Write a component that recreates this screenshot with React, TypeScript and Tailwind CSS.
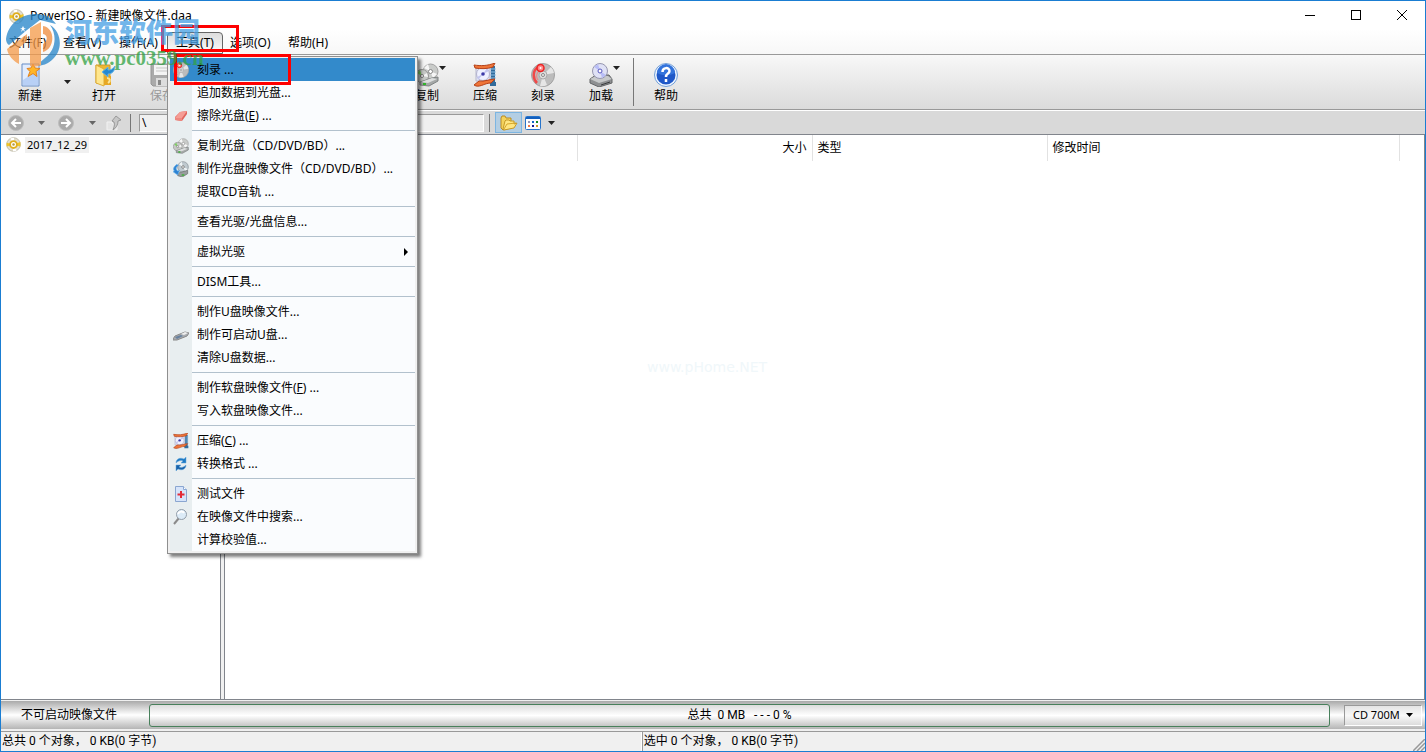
import type { ReactNode } from "react";

const CJK = "font-['Noto_Sans','Noto_Sans_CJK_SC',sans-serif]";
const NARROW = "font-['Roboto','Noto_Sans_CJK_SC',sans-serif]";

function GoldDisc({ className = "" }: { className?: string }) {
  return (
    <svg viewBox="0 0 24 24" className={className}>
      <circle cx="12" cy="12" r="11" fill="#e3dfcf" stroke="#aaa48c" />
      <path d="M12 12 1 9v6ZM12 12l11-4v7Z" fill="#f0c524" />
      <path d="m12 12-5-10 6-1ZM12 12l5 10-6 1Z" fill="#fff" />
      <circle cx="12" cy="12" r="5.500" fill="#fff" stroke="#e0ae1c" strokeWidth="3" />
      <circle cx="12" cy="12" r="2" fill="#b59a46" />
    </svg>
  );
}

function BurnIcon({ className = "" }: { className?: string }) {
  return (
    <svg viewBox="0 0 24 24" className={className}>
      <circle cx="12" cy="12" r="11.500" fill="#bcbcbc" stroke="#a2a2a2" />
      <path d="M12 12 20 4a11 11 0 0 1 3 6ZM12 12l-3 11a11 11 0 0 0 7-1Z" fill="#e6e6e6" />
      <circle cx="12" cy="12" r="4" fill="#ddd" stroke="#aaa" />
      <circle cx="12" cy="12" r="1.500" fill="#f4f4f4" stroke="#888" />
      <path d="M7 4C1 8 2 16 6 20" fill="none" stroke="#f04848" strokeWidth="2.500" />
      <path d="M8 8c-3 3-3 6-1 9" fill="none" stroke="#f77" />
      <circle cx="9.500" cy="5" r="3.500" fill="#f88" stroke="#e22" strokeWidth="1.500" />
      <circle cx="9.500" cy="5" r="1" fill="#fff" />
    </svg>
  );
}

function CopyIcon({ className = "" }: { className?: string }) {
  return (
    <svg viewBox="0 0 24 24" className={className}>
      <circle cx="15.500" cy="8.500" r="7.500" fill="#c9cbc9" stroke="#a2a2a2" />
      <path d="m15 8-6-3 4-4ZM15 8l7 3-4 4Z" fill="#f6f6f6" />
      <circle cx="15.500" cy="8.500" r="2" fill="#fff" stroke="#888" />
      <circle cx="7" cy="13" r="6.500" fill="#c5c8c5" stroke="#959595" />
      <path d="m7 13-5-3 3-3Z" fill="#7cd060" />
      <path d="m7 13 5-3 1 4Z" fill="#f4f4f4" />
      <circle cx="7" cy="13" r="1.500" fill="#fff" stroke="#777" />
      <path d="m5 19 12-4 6-1v4l-9 5-9-1Z" fill="#a5a8a8" stroke="#7f8383" />
      <path d="m6 19 11-4 5 1-9 4Z" fill="#dcdede" />
      <path d="M8 21h3" stroke="#31b52b" strokeWidth="2" />
    </svg>
  );
}

function ImageIcon({ className = "" }: { className?: string }) {
  return (
    <svg viewBox="0 0 24 24" className={className}>
      <circle cx="15" cy="9" r="8" fill="#bfc9cf" stroke="#858d92" />
      <path d="m15 9-6-4 4-4ZM15 9l7 3-3 4Z" fill="#f0f4f6" />
      <circle cx="15" cy="9" r="2" fill="#eee" stroke="#666" />
      <path d="m8 18 14-4v5l-8 5-7-2Z" fill="#999d9e" stroke="#686c6d" />
      <path d="M6 5C0 9 0 13 2 15l-2 1 7 5 3-7-3 1C4 12 4 9 8 7Z" fill="#2c83d3" stroke="#6eb4ea" />
      <path d="M13 21h4" stroke="#35b52d" strokeWidth="2" />
    </svg>
  );
}

function CompressIcon({ className = "" }: { className?: string }) {
  return (
    <svg viewBox="0 0 24 24" className={className}>
      <path d="M20 3v19M17 21h6" stroke="#326b9b" strokeWidth="4" />
      <path d="M17 6h6M17 9h6M17 12h6M17 15h6" stroke="#8fc2e6" />
      <path d="M3 5h14v13H3Z" fill="#e6e8f5" stroke="#b4b6cd" />
      <circle cx="10" cy="11" r="6.500" fill="#eef0ff" stroke="#b3b3cc" />
      <path d="m10 11-6 3 1 3ZM10 11l6-3-2-3Z" fill="#c4c6ee" />
      <circle cx="10" cy="11" r="1.800" fill="#3b39a8" />
      <path d="M1 2c7 1 13 1 21-2l-2 4C14 6 8 6 2 5Z" fill="#ef7538" stroke="#b44119" />
      <path d="m1 22 5-4c5 1 11-2 16-2l-4 4c-6 0-10 4-15 3Z" fill="#ef7538" stroke="#b44119" />
    </svg>
  );
}

function MountIcon({ className = "" }: { className?: string }) {
  return (
    <svg viewBox="0 0 24 24" className={className}>
      <path d="m1 16 6-4h13l3 4v4l-13 4-9-4Z" fill="#8e9092" stroke="#626466" />
      <path d="m1 16 9 4 13-4-4-3H7Z" fill="#c7c9ca" />
      <path d="m12 22 9-3" stroke="#393b3c" />
      <circle cx="11" cy="8" r="7.500" fill="#dfe1f5" stroke="#9696af" />
      <path d="m11 8-6-4 4-3ZM11 8l6 4-4 3Z" fill="#b8bdf6" />
      <circle cx="11" cy="8" r="2" fill="#fff" stroke="#5656be" />
    </svg>
  );
}

function HelpIcon({ className = "" }: { className?: string }) {
  return (
    <svg viewBox="0 0 24 24" className={className}>
      <circle cx="12" cy="12" r="11.500" fill="#eef5ff" stroke="#719ed7" />
      <circle cx="12" cy="12" r="9.500" fill="#1f58c8" />
      <path d="M3 10a9 9 0 0 1 18 0c-6 3-12 3-18 0Z" fill="#3474dc" />
      <path d="M8.500 9c0-5 7-5 7-1 0 3-3.500 2-3.500 6M12 16v3" fill="none" stroke="#fff" strokeWidth="2.500" />
    </svg>
  );
}

function NewIcon() {
  return (
    <svg viewBox="0 0 24 24" className="size-6">
      <path d="M4 1h17v22H4Z" fill="#e2ecfd" stroke="#678dc6" />
      <path d="M5 17 20 7v15H5Z" fill="#b8d0f6" />
      <path d="m15 1 2 4 5 .500-4 3 1 5-4-3-5 3 2-5-3-3 4-.500Z" fill="#ffb527" stroke="#e28320" />
    </svg>
  );
}

function OpenIcon() {
  return (
    <svg viewBox="0 0 24 24" className="size-6">
      <path d="M4 2h14v18H4Z" fill="#efb72e" stroke="#cb9830" />
      <path d="m4 2 8 4v17l-8-3Z" fill="#ffe68d" stroke="#dcad37" />
      <path d="M12 13h7v9h-7" fill="#e7a823" />
      <path d="M15 15c3 0 4 3 1 5" fill="none" stroke="#fbe69a" strokeWidth="2" />
      <path d="M23 3c0 5-3 8-7 8v3l-6-5 6-5v3c3 0 5-1 7-4Z" fill="#2689d1" stroke="#64b4e8" />
    </svg>
  );
}

function SaveIcon() {
  return (
    <svg viewBox="0 0 24 24" className="size-6">
      <path d="M1 1h22v22H3l-2-2Z" fill="#aaa" stroke="#969696" />
      <path d="M4 2h15v10H4Z" fill="#f4f4f4" />
      <path d="M6 5h11M6 8h11" stroke="#c7c7c7" />
      <path d="M6 15h13v8H6Z" fill="#ddd" />
      <path d="M8 17h3v5H8Z" fill="#888" />
    </svg>
  );
}

function FolderIcon() {
  return (
    <svg viewBox="0 0 18 16" className="h-4 w-[18px]">
      <path d="m1 3 1-2h3l1 2h5v10l-8 2-2-2Z" fill="#f4d35c" stroke="#b98b22" />
      <path d="m5 6 1-1h3l1 1h4v3l3-1-3 5-10 2-1-1Z" fill="#ffe681" stroke="#c69a29" />
      <path d="m4 14 3-5 9-1" fill="none" stroke="#d6a72c" />
    </svg>
  );
}

function ViewIcon() {
  return (
    <svg viewBox="0 0 16 14" className="h-3.5 w-4">
      <rect x=".500" y=".500" width="15" height="13" rx="1" fill="#fff" stroke="#2774cb" />
      <path d="M1 1h14v2H1Z" fill="#1560bd" />
      <path d="M3 5h2v2H3Z" fill="#9998b8" />
      <path d="M7 5h2v2H7Z" fill="#1269c7" />
      <path d="M11 5h2v2h-2Z" fill="#118b22" />
      <path d="M3 9h2v2H3Z" fill="#f07845" />
      <path d="M7 9h2v2H7Z" fill="#151a91" />
      <path d="M11 9h2v2h-2Z" fill="#d09926" />
    </svg>
  );
}

function ArrowDisc({ flip = false }: { flip?: boolean }) {
  return (
    <svg viewBox="0 0 16 16" className={flip ? "size-4 -scale-x-100" : "size-4"}>
      <circle cx="8" cy="8" r="7.500" fill="#aaa" stroke="#bdbdbd" />
      <path d="m8 4-4 4 4 4M4 8h9" fill="none" stroke="#fff" strokeWidth="2" />
    </svg>
  );
}

function UpIcon() {
  return (
    <svg viewBox="0 0 16 16" className="size-4">
      <path d="M1 7h5l1 2h4v6H1Z" fill="#e4e4e4" stroke="#f2f2f2" />
      <path d="m10 1 5 4-3 1c0 4-2 7-5 9 1-3 2-5 1-8l-2-1Z" fill="#c7c7c7" stroke="#999" />
    </svg>
  );
}

function EraserIcon() {
  return (
    <svg viewBox="0 0 16 16" className="size-4">
      <path d="m7 4 7-1v3l-5 7-7-1v-3Z" fill="#e0655d" />
      <path d="m2 10 5-6 7-1-5 7Z" fill="#f59d95" />
      <path d="m2 10 7 0v3l-7-1Z" fill="#ee877f" />
    </svg>
  );
}

function UsbIcon() {
  return (
    <svg viewBox="0 0 16 16" className="size-4">
      <path d="m0 12 2-3 10-4 4 1-2 3-10 4H0Z" fill="#a8acb1" stroke="#888" />
      <path d="m2 10 6-2 2 1-6 3Z" fill="#6782a0" />
      <path d="m8 7 4-2 3 1-4 2Z" fill="#eee" />
    </svg>
  );
}

function ConvertIcon() {
  return (
    <svg viewBox="0 0 16 16" className="size-4">
      <path d="M3 7c0-4 4-6 8-4l2-2v6H8l2-2C7 4 5 5 3 7Z" fill="#1e79c4" stroke="#64a9dc" strokeWidth=".500" />
      <path d="M13 9c0 4-4 6-8 4l-2 2V9h5l-2 2c3 1 5 0 7-2Z" fill="#1762aa" stroke="#64a9dc" strokeWidth=".500" />
    </svg>
  );
}

function TestIcon() {
  return (
    <svg viewBox="0 0 16 16" className="size-4">
      <path d="M2.500.500h8l3 3v12h-11Z" fill="#d6e4fa" stroke="#8aa6d0" />
      <path d="M10.500.500v3h3" fill="#fff" stroke="#8aa9d4" />
      <path d="M8 5v7M4.500 8.500h7" stroke="#e32b37" strokeWidth="2" />
    </svg>
  );
}

function SearchIcon() {
  return (
    <svg viewBox="0 0 16 16" className="size-4">
      <path d="m6 9-5 6" stroke="#8a8a8a" strokeWidth="2" />
      <circle cx="8.500" cy="5.500" r="5" fill="#dcebf7" stroke="#929da8" />
      <path d="M5 5c1-3 5-3 6-1" fill="none" stroke="#fff" strokeWidth="2" />
    </svg>
  );
}

function Caret({ className = "text-[#222]" }: { className?: string }) {
  return (
    <svg viewBox="0 0 7 4" className={`h-1 w-[7px] shrink-0 ${className}`}>
      <path d="M0 0h7L3.500 4Z" fill="currentColor" />
    </svg>
  );
}

type Item = { label: ReactNode; icon?: ReactNode; active?: boolean; sub?: boolean };

const groups: Item[][] = [
  [
    { label: "刻录 ...", icon: <BurnIcon className="size-4" />, active: true },
    { label: "追加数据到光盘..." },
    { label: <>擦除光盘(<u>E</u>) ...</>, icon: <EraserIcon /> },
  ],
  [
    { label: "复制光盘（CD/DVD/BD）...", icon: <CopyIcon className="size-4" /> },
    { label: "制作光盘映像文件（CD/DVD/BD）...", icon: <ImageIcon className="size-4" /> },
    { label: "提取CD音轨 ..." },
  ],
  [{ label: "查看光驱/光盘信息..." }],
  [{ label: "虚拟光驱", sub: true }],
  [{ label: "DISM工具..." }],
  [{ label: "制作U盘映像文件..." }, { label: "制作可启动U盘...", icon: <UsbIcon /> }, { label: "清除U盘数据..." }],
  [{ label: <>制作软盘映像文件(<u>F</u>) ...</> }, { label: "写入软盘映像文件..." }],
  [
    { label: <>压缩(<u>C</u>) ...</>, icon: <CompressIcon className="size-4" /> },
    { label: "转换格式 ...", icon: <ConvertIcon /> },
  ],
  [{ label: "测试文件", icon: <TestIcon /> }, { label: "在映像文件中搜索...", icon: <SearchIcon /> }, { label: "计算校验值..." }],
];

function ToolsMenu() {
  return (
    <div className="absolute top-full left-0 z-20 mt-0.5 w-[251px] border border-[#8f8f8f] bg-[#f0f0f0] p-0.5 pt-px pb-0.5 shadow-[3px_3px_3px_rgba(0,0,0,0.5)]">
      <div className="bg-[linear-gradient(to_right,#e8eef0_22px,#fafcfe_22px)]">
        {groups.map((items, g) => (
          <div key={g}>
            {g > 0 && <div className="ml-[22px] flex h-[7px] items-center"><div className="h-px w-full bg-[#b2c1cd]" /></div>}
            {items.map((item, i) => (
              <button
                key={i}
                className={`flex h-[23px] w-full items-center text-left whitespace-nowrap ${item.active ? "bg-[#338acb]" : ""}`}
              >
                <span className="flex w-[27px] shrink-0 pl-[3px]">{item.icon}</span>
                <span className="flex-1">{item.label}</span>
                {item.sub && (
                  <svg viewBox="0 0 4 8" className="mr-[7px] h-2 w-1">
                    <path d="M0 0v8l4-4Z" />
                  </svg>
                )}
              </button>
            ))}
          </div>
        ))}
      </div>
    </div>
  );
}

function Tool({ label, icon, caret, disabled }: { label: string; icon: ReactNode; caret?: boolean; disabled?: boolean }) {
  return (
    <button className={`relative flex w-[58px] shrink-0 flex-col items-center gap-px pt-2 leading-4 ${disabled ? "text-[#999]" : ""}`}>
      {icon}
      <span>{label}</span>
      {caret && <Caret className="absolute top-[11px] right-2.5 text-[#222]" />}
    </button>
  );
}

function TitleBar() {
  return (
    <header className="flex h-[30px] shrink-0 items-center pl-2">
      <GoldDisc className="mr-1.5 size-[15px]" />
      <h1>PowerISO - 新建映像文件.daa</h1>
      <div className="ml-auto flex h-7 self-start">
        <button aria-label="最小化" className="flex w-[46px] items-center justify-center"><span className="h-px w-2.5 bg-black" /></button>
        <button aria-label="最大化" className="flex w-[46px] items-center justify-center"><span className="size-[10px] border border-black" /></button>
        <button aria-label="关闭" className="flex w-[46px] items-center justify-center">
          <svg viewBox="0 0 10 10" className="size-2.5"><path d="m0 0 10 10M10 0 0 10" stroke="#000" /></svg>
        </button>
      </div>
    </header>
  );
}

function MenuBar() {
  return (
    <nav className="flex h-6 shrink-0 items-end border-b border-[#999] pl-2">
      <button className="h-[22px] w-[54px] text-left">文件(F)</button>
      <button className="h-[22px] w-14 text-left">查看(V)</button>
      <button className="h-[22px] w-12 text-left whitespace-nowrap">操作(A)</button>
      <div className="relative">
        <button className="block h-[22px] w-14 rounded-t border border-[#666] bg-gradient-to-b from-[#ddd] to-[#fafafa]">工具(T)</button>
        <div className="pointer-events-none absolute -top-[7px] -left-[6px] z-30 h-[27px] w-[78px] border-3 border-[#fe0000]" />
        <ToolsMenu />
        <div className="pointer-events-none absolute top-[22px] left-[7px] z-30 h-[31px] w-[117px] border-3 border-[#fe0000]" />
      </div>
      <button className="ml-[7px] h-[22px] w-[58px] text-left">选项(O)</button>
      <button className="h-[22px] text-left">帮助(H)</button>
    </nav>
  );
}

function Toolbar() {
  return (
    <div className="flex h-[55px] shrink-0 border-b border-[#999] bg-gradient-to-b from-[#f8f8f8] to-[#dbdbdb]">
      <Tool label="新建" icon={<NewIcon />} />
      <button aria-label="新建选项" className="flex w-4 items-center justify-center"><Caret /></button>
      <Tool label="打开" icon={<OpenIcon />} />
      <Tool label="保存" icon={<SaveIcon />} disabled />
      <div className="w-[207px] shrink-0" />
      <Tool label="复制" icon={<CopyIcon className="size-6" />} caret />
      <Tool label="压缩" icon={<CompressIcon className="size-6" />} />
      <Tool label="刻录" icon={<BurnIcon className="size-6" />} />
      <Tool label="加载" icon={<MountIcon className="size-6" />} caret />
      <div className="mx-[3px] h-12 w-px shrink-0 self-center bg-[#777]" />
      <Tool label="帮助" icon={<HelpIcon className="size-6" />} />
    </div>
  );
}

function AddressBar() {
  return (
    <div className="flex h-[25px] shrink-0 items-center border-t border-b border-t-white border-b-[#81858c] bg-[#d9d9d9] pl-[7px]">
      <button aria-label="后退"><ArrowDisc /></button>
      <button aria-label="后退历史" className="flex w-[34px] justify-center"><Caret className="text-[#666]" /></button>
      <button aria-label="前进"><ArrowDisc flip /></button>
      <button aria-label="前进历史" className="flex w-8 justify-center pl-1"><Caret className="text-[#666]" /></button>
      <button aria-label="上一级"><UpIcon /></button>
      <div className="mx-2 h-[18px] w-px bg-[#777]" />
      <input aria-label="路径" defaultValue="\" className="h-[18px] w-[345px] border border-[#999] border-r-white border-b-white bg-[#f0f0f0] px-0.5 outline-none" />
      <div className="mx-[5px] h-[18px] w-px bg-[#777]" />
      <button aria-label="文件夹" className="flex h-[21px] w-[27px] items-center justify-center border border-[#7db5e1] bg-[#b3cee3]"><FolderIcon /></button>
      <button aria-label="视图" className="ml-[3px] flex items-center gap-[7px]"><ViewIcon /><Caret /></button>
    </div>
  );
}

function FileList() {
  return (
    <main className="flex-1 border-l border-[#81858c] bg-white">
      <table className="w-full table-fixed">
        <thead>
          <tr className="h-[26px] text-left [&>th]:border-r [&>th]:border-[#e2e2e2] [&>th]:px-[5px] [&>th]:font-normal">
            <th className="w-[352px]" />
            <th className="w-[235px] text-right">大小</th>
            <th className="w-[235px]">类型</th>
            <th className="w-[352px]">修改时间</th>
            <th className="border-r-0!" />
          </tr>
        </thead>
      </table>
      <p className="mt-[196px] ml-[422px] font-['DejaVu_Sans',sans-serif] text-sm text-[#f0f7fa]">www.pHome.NET</p>
    </main>
  );
}

function Watermark() {
  return (
    <div className="pointer-events-none absolute top-[13px] left-1 z-40 flex opacity-75">
      <svg viewBox="0 0 56 56" className="size-14">
        <path d="M1 25C3 10 16 0 31 0c9 0 16 4 20 10L35 6 22 16 4 31c-2-1-3-4-3-6Z" fill="#2484c9" />
        <path d="M45 11c12 7 13 25 3 34-5 5-11 7-17 7l9-8c10-7 13-22 5-33Z" fill="#2484c9" />
        <path d="M2 35 22 20v7l-8 7v16C8 47 3 41 2 35Z" fill="#f59a48" />
        <path d="M25 14 36 8v43c-4 2-8 2-11 1Z" fill="#f59a48" />
        <path d="M38 12c13 2 12 23 0 26v-8c5-3 5-9 0-10Z" fill="#ef8b3b" />
        <path d="m18 12 1 2h2l-2 1 1 3-2-2-2 2 1-3-2-1h2Z" fill="#fff" />
      </svg>
      <div className="pl-1">
        <p className="font-['Noto_Sans_CJK_SC',sans-serif] text-[27px] leading-[34px] font-black text-[#439ee3]">河东软件园</p>
        <p className="font-['Liberation_Serif',serif] text-[21px] leading-[20px] font-bold text-[#32a243]">www.pc0359.cn</p>
      </div>
    </div>
  );
}

export default function App() {
  return (
    <div className={`relative flex h-screen flex-col overflow-hidden border border-[#1a7dd2] bg-[linear-gradient(#fff_28px,#f7f7f7_54px,#f0f0f0_55px)] text-xs text-black ${CJK}`}>
      <TitleBar />
      <MenuBar />
      <Toolbar />
      <AddressBar />
      <div className="flex min-h-0 flex-1 border-r border-b border-[#81858c]">
        <aside className="w-[220px] shrink-0 border-r border-[#81858c] bg-white pl-[5px]">
          <button className="flex h-[19px] items-center gap-1">
            <GoldDisc className="size-[15px]" />
            <span className="bg-[#f0f0f0] px-0.5 text-[11px] leading-4">2017_12_29</span>
          </button>
        </aside>
        <div className="w-[3px] shrink-0 bg-[#f0f0f0]" />
        <FileList />
      </div>
      <div className="mt-px flex h-7 shrink-0 items-center bg-[linear-gradient(#aaa,#fff_50%,#b5b5b5)] pr-[3px]">
        <span className="w-[148px] shrink-0 pl-5">不可启动映像文件</span>
        <div className={`flex h-[23px] flex-1 items-center justify-center rounded-[3px] border border-[#48805b] bg-[linear-gradient(#ddd,#fff_50%,#c5c5c5)] whitespace-pre ${NARROW}`}>
          {"总共  0 MB   - - - 0 %"}
        </div>
        <button className="ml-3.5 flex h-[21px] w-[78px] items-center justify-between border border-[#999] border-r-white border-b-white bg-[linear-gradient(#e4e4e4,#f8f8f8_50%,#dcdcdc)] px-2 text-[11px]">
          CD 700M <Caret className="text-black" />
        </button>
      </div>
      <footer className={`mt-0.5 flex h-5 shrink-0 border-t border-[#999] bg-[#f0f0f0] leading-[18px] ${NARROW}`}>
        <span className="w-[45%] border-r border-white pl-px">总共 0 个对象， 0 KB(0 字节)</span>
        <span className="flex-1 border-l border-[#999] pl-px">选中 0 个对象， 0 KB(0 字节)</span>
        <svg viewBox="0 0 12 12" className="size-3 self-end">
          <path d="M0 12 12 0M4 12l8-8M8 12l4-4" stroke="#999" strokeWidth="1.500" />
        </svg>
      </footer>
      <Watermark />
    </div>
  );
}
